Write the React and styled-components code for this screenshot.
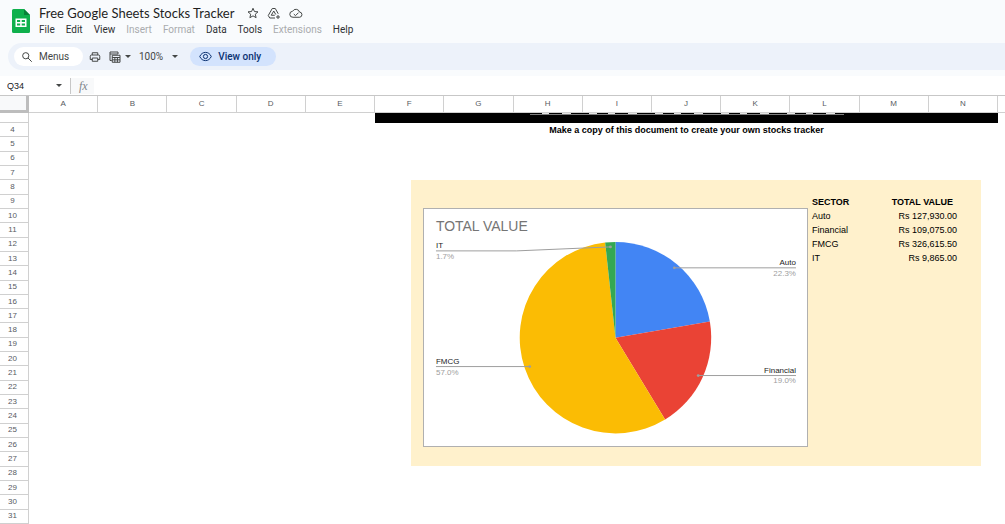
import styled, { createGlobalStyle } from "styled-components"

const COLUMNS = "ABCDEFGHIJKLMN".split("")
const FIRST_ROW = 4
const LAST_ROW = 31
const ROWS = Array.from({ length: LAST_ROW - FIRST_ROW + 1 }, (_, i) => FIRST_ROW + i)

const MENUS = [
    { name: "File" },
    { name: "Edit" },
    { name: "View" },
    { name: "Insert", disabled: true },
    { name: "Format", disabled: true },
    { name: "Data" },
    { name: "Tools" },
    { name: "Extensions", disabled: true },
    { name: "Help" },
]

const SECTORS = [
    { name: "Auto", value: 127930, color: "#4285f4" },
    { name: "Financial", value: 109075, color: "#ea4335" },
    { name: "FMCG", value: 326615.5, color: "#fbbc04" },
    { name: "IT", value: 9865, color: "#34a853" },
]

const LABELS = [
    { name: "IT", share: "1.7%", x: 12, y: 42, anchor: "start", line: "12,42 93,42 187,38", dot: [187, 38] },
    { name: "FMCG", share: "57.0%", x: 12, y: 158, anchor: "start", line: "12,158 106,158", dot: [106, 158] },
    { name: "Auto", share: "22.3%", x: 373, y: 59, anchor: "end", line: "373,59 251,59", dot: [251, 59] },
    { name: "Financial", share: "19.0%", x: 373, y: 167, anchor: "end", line: "373,167 275,167", dot: [275, 167] },
]

const formatRs = value =>
    "Rs " + value.toLocaleString("en-US", { minimumFractionDigits: 2, maximumFractionDigits: 2 })

const CENTER = { x: 192, y: 129, r: 96 }

const getSlices = () => {
    const total = SECTORS.reduce((sum, s) => sum + s.value, 0)
    let angle = 0
    return SECTORS.map(sector => {
        const start = angle
        angle += (sector.value / total) * Math.PI * 2
        const point = a => `${CENTER.x + CENTER.r * Math.sin(a)} ${CENTER.y - CENTER.r * Math.cos(a)}`
        const large = angle - start > Math.PI ? 1 : 0
        return {
            ...sector,
            d: `M${CENTER.x} ${CENTER.y}L${point(start)}A${CENTER.r} ${CENTER.r} 0 ${large} 1 ${point(angle)}Z`,
        }
    })
}

const PieChart = () => (
    <Svg viewBox="0 0 384 237" role="img" aria-label="Total value by sector">
        <ChartTitle x="12" y="22">TOTAL VALUE</ChartTitle>
        {getSlices().map(slice => <path key={slice.name} d={slice.d} fill={slice.color} />)}
        {LABELS.map(label => (
            <g key={label.name}>
                <polyline points={label.line} fill="none" stroke="#9e9e9e" />
                <circle cx={label.dot[0]} cy={label.dot[1]} r="1.4" fill="#9e9e9e" />
                <LabelText x={label.x} y={label.y - 3} textAnchor={label.anchor}>{label.name}</LabelText>
                <LabelText $muted x={label.x} y={label.y + 8} textAnchor={label.anchor}>{label.share}</LabelText>
            </g>
        ))}
    </Svg>
)

const SheetsLogo = () => (
    <svg width="18" height="24" viewBox="0 0 18 24" aria-hidden="true">
        <path d="M1.500 0H12l6 6v16.500a1.500 1.500 0 0 1-1.500 1.500h-15A1.500 1.500 0 0 1 0 22.500v-21A1.500 1.500 0 0 1 1.500 0z" fill="#0fb04c" />
        <path d="M12 0l6 6h-6z" fill="#088038" />
        <path d="M3.500 9.500h11v8.500h-11zM5 11v2h3.200v-2zM9.700 11v2H13v-2zM5 14.400v2h3.200v-2zM9.700 14.400v2H13v-2z" fill="#fff" fillRule="evenodd" />
    </svg>
)

const StarIcon = () => (
    <Icon width="12" height="12" viewBox="0 0 24 24">
        <path d="M12 2.500l2.900 6.600 7.100.6-5.400 4.700 1.600 7L12 17.700l-6.200 3.700 1.600-7L2 9.700l7.100-.6z" />
    </Icon>
)

const DriveIcon = () => (
    <Icon width="14" height="13" viewBox="0 0 28 26">
        <path d="M16 22H5.500L2.500 17 10.500 3h6l6 10.500" />
        <path d="M8.500 16.500l5-8.500 4 7M8.500 16.500h7" />
        <path d="M22 16v8M18 20h8" />
    </Icon>
)

const CloudIcon = () => (
    <Icon width="14" height="12" viewBox="0 0 28 24">
        <path d="M8 20.500a6 6 0 0 1-.8-12A7.500 7.500 0 0 1 21 10a5.300 5.300 0 0 1 .5 10.500z" />
        <path d="M9.500 14l3.500 3.300 6-6" />
    </Icon>
)

const SearchIcon = () => (
    <Icon width="12" height="12" viewBox="0 0 24 24">
        <circle cx="9.500" cy="9.500" r="6.200" />
        <path d="M14 14l7.500 7.500" />
    </Icon>
)

const PrintIcon = () => (
    <Icon width="12" height="12" viewBox="0 0 24 24">
        <path d="M6.500 8V3.500h11V8M6.500 17H2.500v-6.500A2.500 2.500 0 0 1 5 8h14a2.500 2.500 0 0 1 2.500 2.500V17h-4M6.500 14h11v6.500h-11z" />
    </Icon>
)

const FilterIcon = () => (
    <Icon width="12" height="12" viewBox="0 0 24 24">
        <path d="M5.500 19H2V2h16v4M2 6h16M6.500 8.500h15.500V22.500H6.500zM6.500 13H22M6.500 17.700H22M11.700 13v9.500M16.800 13v9.500" />
    </Icon>
)

const EyeIcon = () => (
    <Icon width="13" height="11" viewBox="0 0 26 22">
        <path d="M1.500 11C4 5.500 8 2.800 13 2.800S22 5.500 24.500 11C22 16.500 18 19.200 13 19.200S4 16.500 1.500 11z" />
        <circle cx="13" cy="11" r="4.200" />
    </Icon>
)

const App = () => (
    <Page>
        <GlobalStyle />
        <Header>
            <SheetsLogo />
            <div>
                <TitleRow>
                    <Title>Free Google Sheets Stocks Tracker</Title>
                    <IconButton aria-label="Star"><StarIcon /></IconButton>
                    <IconButton aria-label="Add shortcut to Drive"><DriveIcon /></IconButton>
                    <IconButton aria-label="See document status"><CloudIcon /></IconButton>
                </TitleRow>
                <MenuBar>
                    {MENUS.map(menu => (
                        <MenuButton key={menu.name} disabled={menu.disabled}>{menu.name}</MenuButton>
                    ))}
                </MenuBar>
            </div>
        </Header>
        <Toolbar>
            <SearchButton><SearchIcon />Menus</SearchButton>
            <IconButton aria-label="Print"><PrintIcon /></IconButton>
            <IconButton aria-label="Filter views"><FilterIcon /><Caret /></IconButton>
            <ZoomButton aria-label="Zoom">100%<Caret /></ZoomButton>
            <ViewOnly><EyeIcon />View only</ViewOnly>
        </Toolbar>
        <FormulaBar>
            <NameBox aria-label="Name box" defaultValue="Q34" />
            <IconButton aria-label="Named ranges"><Caret /></IconButton>
            <Fx>fx</Fx>
            <Formula aria-label="Formula" readOnly />
        </FormulaBar>
        <Sheet>
            <Corner />
            {COLUMNS.map(column => <ColumnHead key={column}>{column}</ColumnHead>)}
            <ColumnHead />
            <RowHeads>
                <RowHead />
                {ROWS.map(row => <RowHead key={row}>{row}</RowHead>)}
            </RowHeads>
            <Band>
                <svg width="314" height="3" viewBox="0 0 314 3" aria-hidden="true">
                    <path d="M0 1.500H314" stroke="#7d7d7d" />
                    <path d="M12 .5H306" stroke="#e4e4e4" strokeDasharray="7 13 9 18 8 11" />
                </svg>
            </Band>
            <Notice>Make a copy of this document to create your own stocks tracker</Notice>
            <Panel>
                <ChartBox><PieChart /></ChartBox>
                <SectorTable>
                    <thead>
                        <tr><th>SECTOR</th><th>TOTAL VALUE</th></tr>
                    </thead>
                    <tbody>
                        {SECTORS.map(sector => (
                            <tr key={sector.name}>
                                <td>{sector.name}</td>
                                <td>{formatRs(sector.value)}</td>
                            </tr>
                        ))}
                    </tbody>
                </SectorTable>
            </Panel>
        </Sheet>
    </Page>
)

const GlobalStyle = createGlobalStyle`
*{
    box-sizing:border-box;
}
body{
    margin:0;
    background:#ffffff;
    font-family:"Liberation Sans", Arial, sans-serif;
}
button, input{
    margin:0;
    padding:0;
    border:0;
    background:none;
    font:inherit;
    color:inherit;
}
`
const Page = styled.div`
display:flex;
flex-direction:column;
min-height:100vh;
background:#f9fbfd;
`
const Header = styled.header`
display:flex;
align-items:flex-start;
gap:9px;
padding:9px 12px 0;
height:43px;
font-family:Roboto, "Liberation Sans", sans-serif;
& > div{
    margin-top:-5px;
}
`
const TitleRow = styled.div`
display:flex;
align-items:center;
gap:8px;
height:18px;
color:#444746;
`
const Title = styled.h1`
margin:0 5px 0 0;
font-family:Lato, Roboto, sans-serif;
font-size:13px;
font-weight:400;
line-height:18px;
color:#1f1f1f;
white-space:nowrap;
`
const MenuBar = styled.nav`
display:flex;
gap:11px;
`
const MenuButton = styled.button`
font-size:10px;
line-height:16px;
color:#303134;
&:disabled{
    color:#a9abae;
}
`
const Icon = styled.svg`
fill:none;
stroke:currentColor;
stroke-width:2;
stroke-linejoin:round;
`
const IconButton = styled.button`
display:flex;
align-items:center;
gap:4px;
color:#444746;
`
const Caret = styled.span`
border:3px solid transparent;
border-top-color:#444746;
border-bottom:0;
`
const Toolbar = styled.div`
display:flex;
align-items:center;
gap:8px;
margin-left:8px;
padding-left:6px;
height:27px;
border-radius:14px 0 0 14px;
background:#edf2fa;
font-family:Roboto, "Liberation Sans", sans-serif;
font-size:10px;
color:#444746;
`
const SearchButton = styled.button`
display:flex;
align-items:center;
gap:6px;
margin-right:-2px;
width:69px;
height:19px;
padding-left:7px;
border-radius:10px;
background:#ffffff;
`
const ZoomButton = styled.button`
display:flex;
align-items:center;
gap:9px;
`
const ViewOnly = styled.button`
display:flex;
align-items:center;
gap:6px;
margin-left:4px;
padding:0 15px 0 9px;
height:19px;
border-radius:10px;
background:#d3e3fd;
color:#0b3272;
font-weight:500;
`
const FormulaBar = styled.div`
display:flex;
align-items:center;
margin-top:6px;
height:19px;
background:#ffffff;
font-size:9px;
color:#202124;
`
const NameBox = styled.input`
width:56px;
padding-left:7px;
`
const Fx = styled.span`
margin-left:8px;
padding-left:8px;
width:24px;
border-left:1px solid #c7c7c7;
background:#f8f9fa;
font:italic 12px/16px "Liberation Serif", serif;
color:#80868b;
`
const Formula = styled.input`
flex:1;
`
const Sheet = styled.main`
flex:1;
display:grid;
grid-template-columns:29px repeat(14, 1fr) 7px;
grid-template-rows:17px 10px repeat(28, minmax(14px, 1fr));
border-top:1px solid #c7c7c7;
background:#ffffff;
`
const Corner = styled.div`
border-right:3px solid #bdbdbd;
border-bottom:3px solid #bdbdbd;
background:#f8f9fa;
`
const ColumnHead = styled.div`
border-right:1px solid #d0d0d0;
border-bottom:1px solid #d0d0d0;
font-size:8px;
line-height:16px;
text-align:center;
color:#575b5f;
&:nth-of-type(16){
    border-right:0;
}
`
const RowHeads = styled.div`
grid-column:1;
grid-row:2 / -1;
display:grid;
grid-template-rows:subgrid;
`
const RowHead = styled.div`
display:flex;
align-items:center;
justify-content:center;
padding-right:3px;
border-right:1px solid #d0d0d0;
border-bottom:1px solid #d0d0d0;
font-size:8px;
line-height:12px;
color:#575b5f;
`
const Band = styled.div`
grid-column:7 / 16;
grid-row:2;
display:flex;
justify-content:center;
background:#000000;
`
const Notice = styled.p`
grid-column:7 / 16;
grid-row:3;
margin:0;
font-size:9px;
font-weight:700;
line-height:14px;
text-align:center;
color:#000000;
`
const Panel = styled.section`
grid-column:7 / 16;
grid-row:7 / 27;
display:grid;
grid-template-columns:1fr 145px;
grid-template-rows:subgrid;
column-gap:4px;
margin:0 17px 1px 36px;
padding:0 24px 0 12px;
background:#fff1cc;
`
const ChartBox = styled.div`
grid-column:1;
grid-row:1 / -1;
align-self:start;
margin-top:28px;
border:1px solid #b0b0b0;
background:#ffffff;
`
const Svg = styled.svg`
display:block;
width:100%;
`
const ChartTitle = styled.text`
font-size:14px;
fill:#757575;
`
const LabelText = styled.text`
font-size:8px;
fill:${props => (props.$muted ? "#9e9e9e" : "#222222")};
`
const SectorTable = styled.table`
grid-column:2;
grid-row:2 / 7;
align-self:start;
width:100%;
border-collapse:collapse;
font-size:9px;
line-height:14px;
color:#000000;
th, td{
    padding:0;
    text-align:left;
}
th:last-child{
    padding-right:4px;
}
th:last-child, td:last-child{
    text-align:right;
}
`

export default App
